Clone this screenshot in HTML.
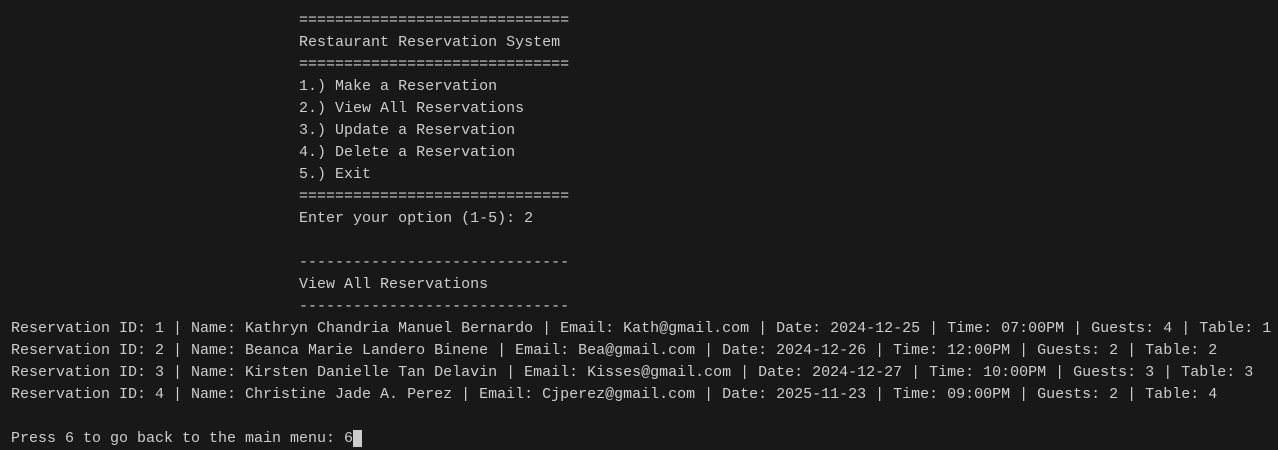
<html><head><style>
body{margin:0;background:#181818;width:1278px;height:447px;overflow:hidden}
pre{margin:0;padding:10px 0 0 11px;font-family:"Liberation Mono",monospace;font-size:15px;line-height:22px;color:#cccccc}
.c{background:#cccccc;color:#181818}
</style></head><body><pre>                                ==============================
                                Restaurant Reservation System
                                ==============================
                                1.) Make a Reservation
                                2.) View All Reservations
                                3.) Update a Reservation
                                4.) Delete a Reservation
                                5.) Exit
                                ==============================
                                Enter your option (1-5): 2

                                ------------------------------
                                View All Reservations
                                ------------------------------
Reservation ID: 1 | Name: Kathryn Chandria Manuel Bernardo | Email: Kath@gmail.com | Date: 2024-12-25 | Time: 07:00PM | Guests: 4 | Table: 1
Reservation ID: 2 | Name: Beanca Marie Landero Binene | Email: Bea@gmail.com | Date: 2024-12-26 | Time: 12:00PM | Guests: 2 | Table: 2
Reservation ID: 3 | Name: Kirsten Danielle Tan Delavin | Email: Kisses@gmail.com | Date: 2024-12-27 | Time: 10:00PM | Guests: 3 | Table: 3
Reservation ID: 4 | Name: Christine Jade A. Perez | Email: Cjperez@gmail.com | Date: 2025-11-23 | Time: 09:00PM | Guests: 2 | Table: 4

Press 6 to go back to the main menu: 6<span class="c"> </span></pre></body></html>
